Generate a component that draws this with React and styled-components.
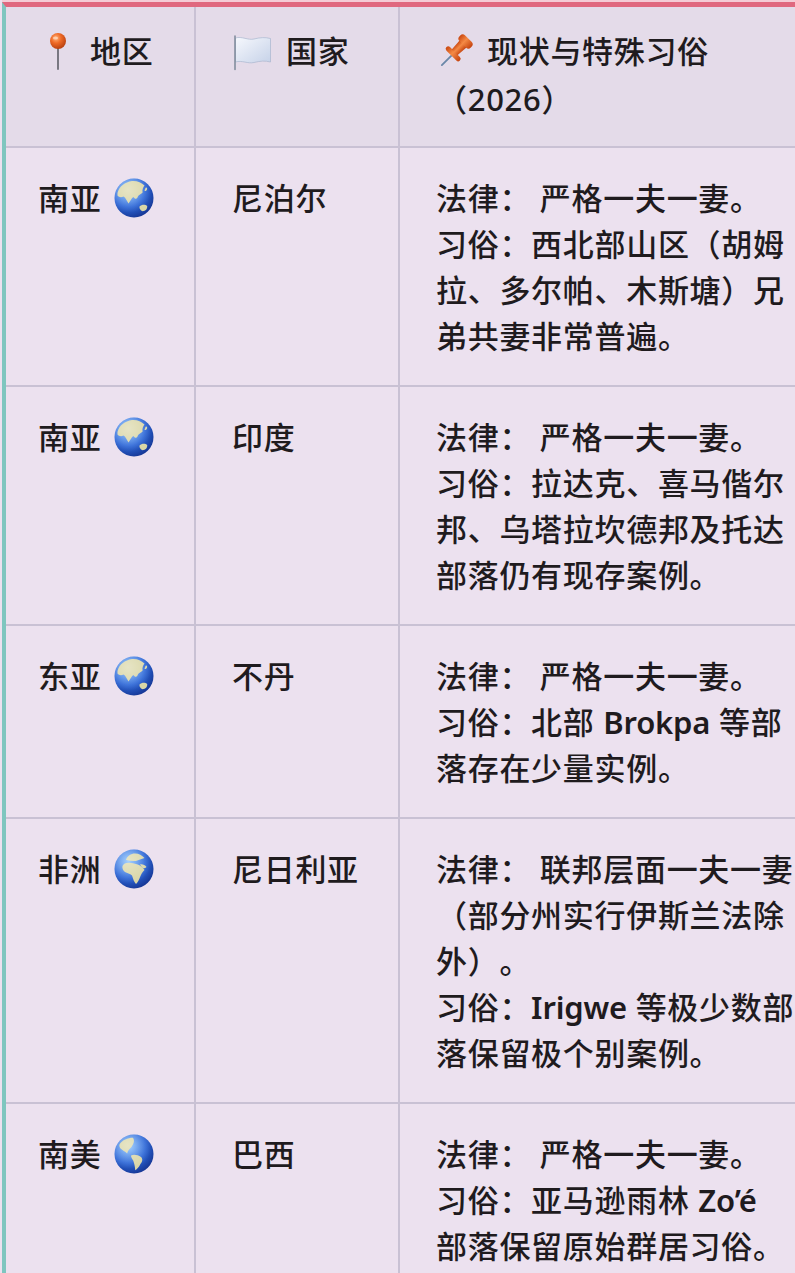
import React, { Fragment, useId } from "react";
import styled, { createGlobalStyle } from "styled-components";

const LINE = "#c9c1d4";

const GlobalStyle = createGlobalStyle`
  *, *::before, *::after { box-sizing: border-box; }
  html, body {
    margin: 0;
    padding: 0;
    overflow: hidden;
    background: #ece1ef;
  }
  body {
    font-family: "Noto Sans", "Noto Sans CJK SC", sans-serif;
    color: #1f1b1e;
    text-spacing-trim: space-all;
  }
`;

const Frame = styled.div`
  margin: 2px 0 0 2px;
  width: 842px;
  border-top: 5px solid #e0687f;
  border-left: 4px solid #7fc6bf;
  box-shadow: 0 -2px 0 #f4ccd6;
  background: #ece1ef;
`;

const Row = styled.div`
  display: grid;
  grid-template-columns: 190px 204px 444px;
  background: ${(p) => (p.$head ? "#e4dbe9" : "#ece1ef")};
  border-bottom: 2px solid ${LINE};
`;

const Cell = styled.div`
  border-right: 2px solid ${LINE};
  padding: ${(p) => (p.$head ? "20px 0 23px" : "27px 0 26px")};
  padding-left: ${(p) => (p.$first ? 32 : 36)}px;
  font-size: 31px;
  letter-spacing: 0.7px;
  line-height: ${(p) => (p.$head ? 48 : 46)}px;
  font-weight: 500;
  white-space: nowrap;
  text-spacing-trim: space-all;
`;

const Para = styled.div``;

const Latin = styled.span`
  font-weight: 600;
  letter-spacing: -0.2px;
`;

const Icon = styled.svg`
  display: inline-block;
  width: 40px;
  height: 40px;
  vertical-align: -8px;
  margin-right: ${(p) => p.$right ?? 0}px;
  margin-left: ${(p) => p.$left ?? 0}px;
`;

function RoundPin() {
  const id = useId();
  return (
    <Icon viewBox="0 0 40 40" $right={12}>
      <defs>
        <radialGradient id={id} cx="0.38" cy="0.32" r="0.7">
          <stop offset="0" stopColor="#ffb27a" />
          <stop offset="0.45" stopColor="#ef6a26" />
          <stop offset="1" stopColor="#b8400f" />
        </radialGradient>
      </defs>
      <line x1="20" y1="16" x2="20" y2="38" stroke="#6c6c76" strokeWidth="1.8" strokeLinecap="round" />
      <circle cx="20" cy="10" r="8" fill={`url(#${id})`} />
      <ellipse cx="17.5" cy="7" rx="2.6" ry="1.6" fill="#ffe0c8" opacity="0.7" />
    </Icon>
  );
}

function WhiteFlag() {
  const id = useId();
  return (
    <Icon viewBox="0 0 40 40" $right={14}>
      <defs>
        <linearGradient id={id} x1="0" y1="0" x2="1" y2="1">
          <stop offset="0" stopColor="#f6f8fd" />
          <stop offset="1" stopColor="#c6d2e8" />
        </linearGradient>
      </defs>
      <path
        d="M3.5 7 C10 5 16 9.5 22 8 C28 6.5 33 6 38.5 7.5 L38.5 31 C33 29.5 28 30 22 31.5 C16 33 10 29 3.5 31 Z"
        fill={`url(#${id})`}
        stroke="#a9b6cf"
        strokeWidth="0.7"
      />
      <line x1="3" y1="5" x2="3" y2="38.5" stroke="#7d8898" strokeWidth="1.5" strokeLinecap="round" />
    </Icon>
  );
}

function PushPin() {
  const id = useId();
  return (
    <Icon viewBox="0 0 40 40" $right={11}>
      <defs>
        <linearGradient id={id} x1="0" y1="0" x2="1" y2="0">
          <stop offset="0" stopColor="#c9460f" />
          <stop offset="0.45" stopColor="#f58a45" />
          <stop offset="1" stopColor="#c4420e" />
        </linearGradient>
      </defs>
      <g transform="rotate(45 20 20)">
        <line x1="20" y1="25" x2="20" y2="40" stroke="#6a87a8" strokeWidth="1.8" strokeLinecap="round" />
        <rect x="10.5" y="21.5" width="19" height="5" rx="2.5" fill={`url(#${id})`} />
        <path d="M15 9 L25 9 L24 22 L16 22 Z" fill={`url(#${id})`} />
        <rect x="12" y="2.5" width="16" height="8" rx="3.5" fill={`url(#${id})`} />
      </g>
    </Icon>
  );
}

const LAND = {
  asia: [
    "M3.5 15 C5 8.5 11 4 18 3 C23 2.6 27.5 4.5 30.5 7.5 C29 9.5 28 11.5 28.6 14.5 C26.5 16.5 24.5 16.5 23.5 19.5 C22.4 21.5 20.5 21 19.5 19 C17.5 20 16.5 23 14.5 25.5 C12.5 22.5 11.5 19.5 9.5 18.5 C7.5 19.5 5 19.5 3.5 17.5 Z",
    "M31.5 10 C32.5 9 33.5 10 33 11.5 C32.5 13 31 13.5 30.5 12.5 Z",
    "M25.5 28.5 C27.5 26.2 31.5 26 33.2 28 C33.5 31 31.5 33.2 28.5 33.2 C26.5 32.5 25 30.5 25.5 28.5 Z",
  ],
  africa: [
    "M12 11 C13 7 17 4.5 21 4.5 C25 4.5 28 6.5 30.5 9 C27.5 10 24.5 11 22 12 C19 12.3 15.5 12 12 11 Z",
    "M8.5 17 C9.5 14 13.5 13 17 14 C20 14 22 15 25 16 C27 17 29.5 19 30.5 21 C28.5 23 27.3 25 26.3 27.5 C25 30.5 24 33 22 35 C20 33 19 29.5 18 26.5 C16 24.5 13 24.3 11 23 C9 21.5 8 19.3 8.5 17 Z",
    "M26 15.5 C28.5 15 31 16 32.5 18 C31 19.5 29.5 19.5 28 18.5 Z",
  ],
  americas: [
    "M5.5 10.5 C8.5 6 13.5 3.8 19 3.8 C21 7 19.5 10 17.5 13 C15.5 15 13.5 17 13.2 19.5 C11 17.5 8.5 16.2 6.5 14.5 C5.5 13.2 5.2 11.8 5.5 10.5 Z",
    "M17 21.5 C20 20.2 24 21 27 23 C29.2 25 28.3 28 26.3 30.2 C25 33 23.2 35 21.2 36.2 C21 32.5 20.2 29.3 19.2 26.5 C18 24.5 17 23.3 17 21.5 Z",
  ],
};

function Globe({ kind }) {
  const ocean = useId();
  const shine = useId();
  return (
    <Icon viewBox="0 0 40 40" $left={13}>
      <defs>
        <radialGradient id={ocean} cx="0.36" cy="0.3" r="0.78">
          <stop offset="0" stopColor="#74b8ff" />
          <stop offset="0.55" stopColor="#2c66d6" />
          <stop offset="1" stopColor="#13308c" />
        </radialGradient>
        <radialGradient id={shine} cx="0.35" cy="0.28" r="0.6">
          <stop offset="0" stopColor="#ffffff" stopOpacity="0.35" />
          <stop offset="1" stopColor="#ffffff" stopOpacity="0" />
        </radialGradient>
      </defs>
      <circle cx="20" cy="20" r="19.5" fill={`url(#${ocean})`} />
      {LAND[kind].map((d, i) => (
        <path key={i} d={d} fill="#d9d6a6" />
      ))}
      <circle cx="20" cy="20" r="19.5" fill={`url(#${shine})`} />
    </Icon>
  );
}

function withLatin(text) {
  return text.split(/([A-Za-z’é]+)/).map((part, i) =>
    i % 2 === 1 ? <Latin key={i}>{part}</Latin> : <Fragment key={i}>{part}</Fragment>
  );
}

function Lines({ lines }) {
  return lines.map((l, i) => (
    <Fragment key={i}>
      {i > 0 && <br />}
      {withLatin(l)}
    </Fragment>
  ));
}

const ROWS = [
  {
    region: "南亚",
    globe: "asia",
    country: "尼泊尔",
    law: ["法律： 严格一夫一妻。"],
    custom: ["习俗：西北部山区（胡姆", "拉、多尔帕、木斯塘）兄", "弟共妻非常普遍。"],
  },
  {
    region: "南亚",
    globe: "asia",
    country: "印度",
    law: ["法律： 严格一夫一妻。"],
    custom: ["习俗：拉达克、喜马偕尔", "邦、乌塔拉坎德邦及托达", "部落仍有现存案例。"],
  },
  {
    region: "东亚",
    globe: "asia",
    country: "不丹",
    law: ["法律： 严格一夫一妻。"],
    custom: ["习俗：北部 Brokpa 等部", "落存在少量实例。"],
  },
  {
    region: "非洲",
    globe: "africa",
    country: "尼日利亚",
    law: ["法律： 联邦层面一夫一妻", "（部分州实行伊斯兰法除", "外）。"],
    custom: ["习俗：Irigwe 等极少数部", "落保留极个别案例。"],
  },
  {
    region: "南美",
    globe: "americas",
    country: "巴西",
    law: ["法律： 严格一夫一妻。"],
    custom: ["习俗：亚马逊雨林 Zo’é", "部落保留原始群居习俗。"],
  },
];

export default function App() {
  return (
    <>
      <GlobalStyle />
      <Frame>
        <Row $head>
          <Cell $head $first>
            <RoundPin />地区
          </Cell>
          <Cell $head>
            <WhiteFlag />国家
          </Cell>
          <Cell $head>
            <PushPin />现状与特殊习俗
            <br />（2026）
          </Cell>
        </Row>
        {ROWS.map((r, i) => (
          <Row key={i}>
            <Cell $first>
              {r.region}
              <Globe kind={r.globe} />
            </Cell>
            <Cell>{r.country}</Cell>
            <Cell>
              <Para>
                <Lines lines={r.law} />
              </Para>
              <Para>
                <Lines lines={r.custom} />
              </Para>
            </Cell>
          </Row>
        ))}
      </Frame>
    </>
  );
}
